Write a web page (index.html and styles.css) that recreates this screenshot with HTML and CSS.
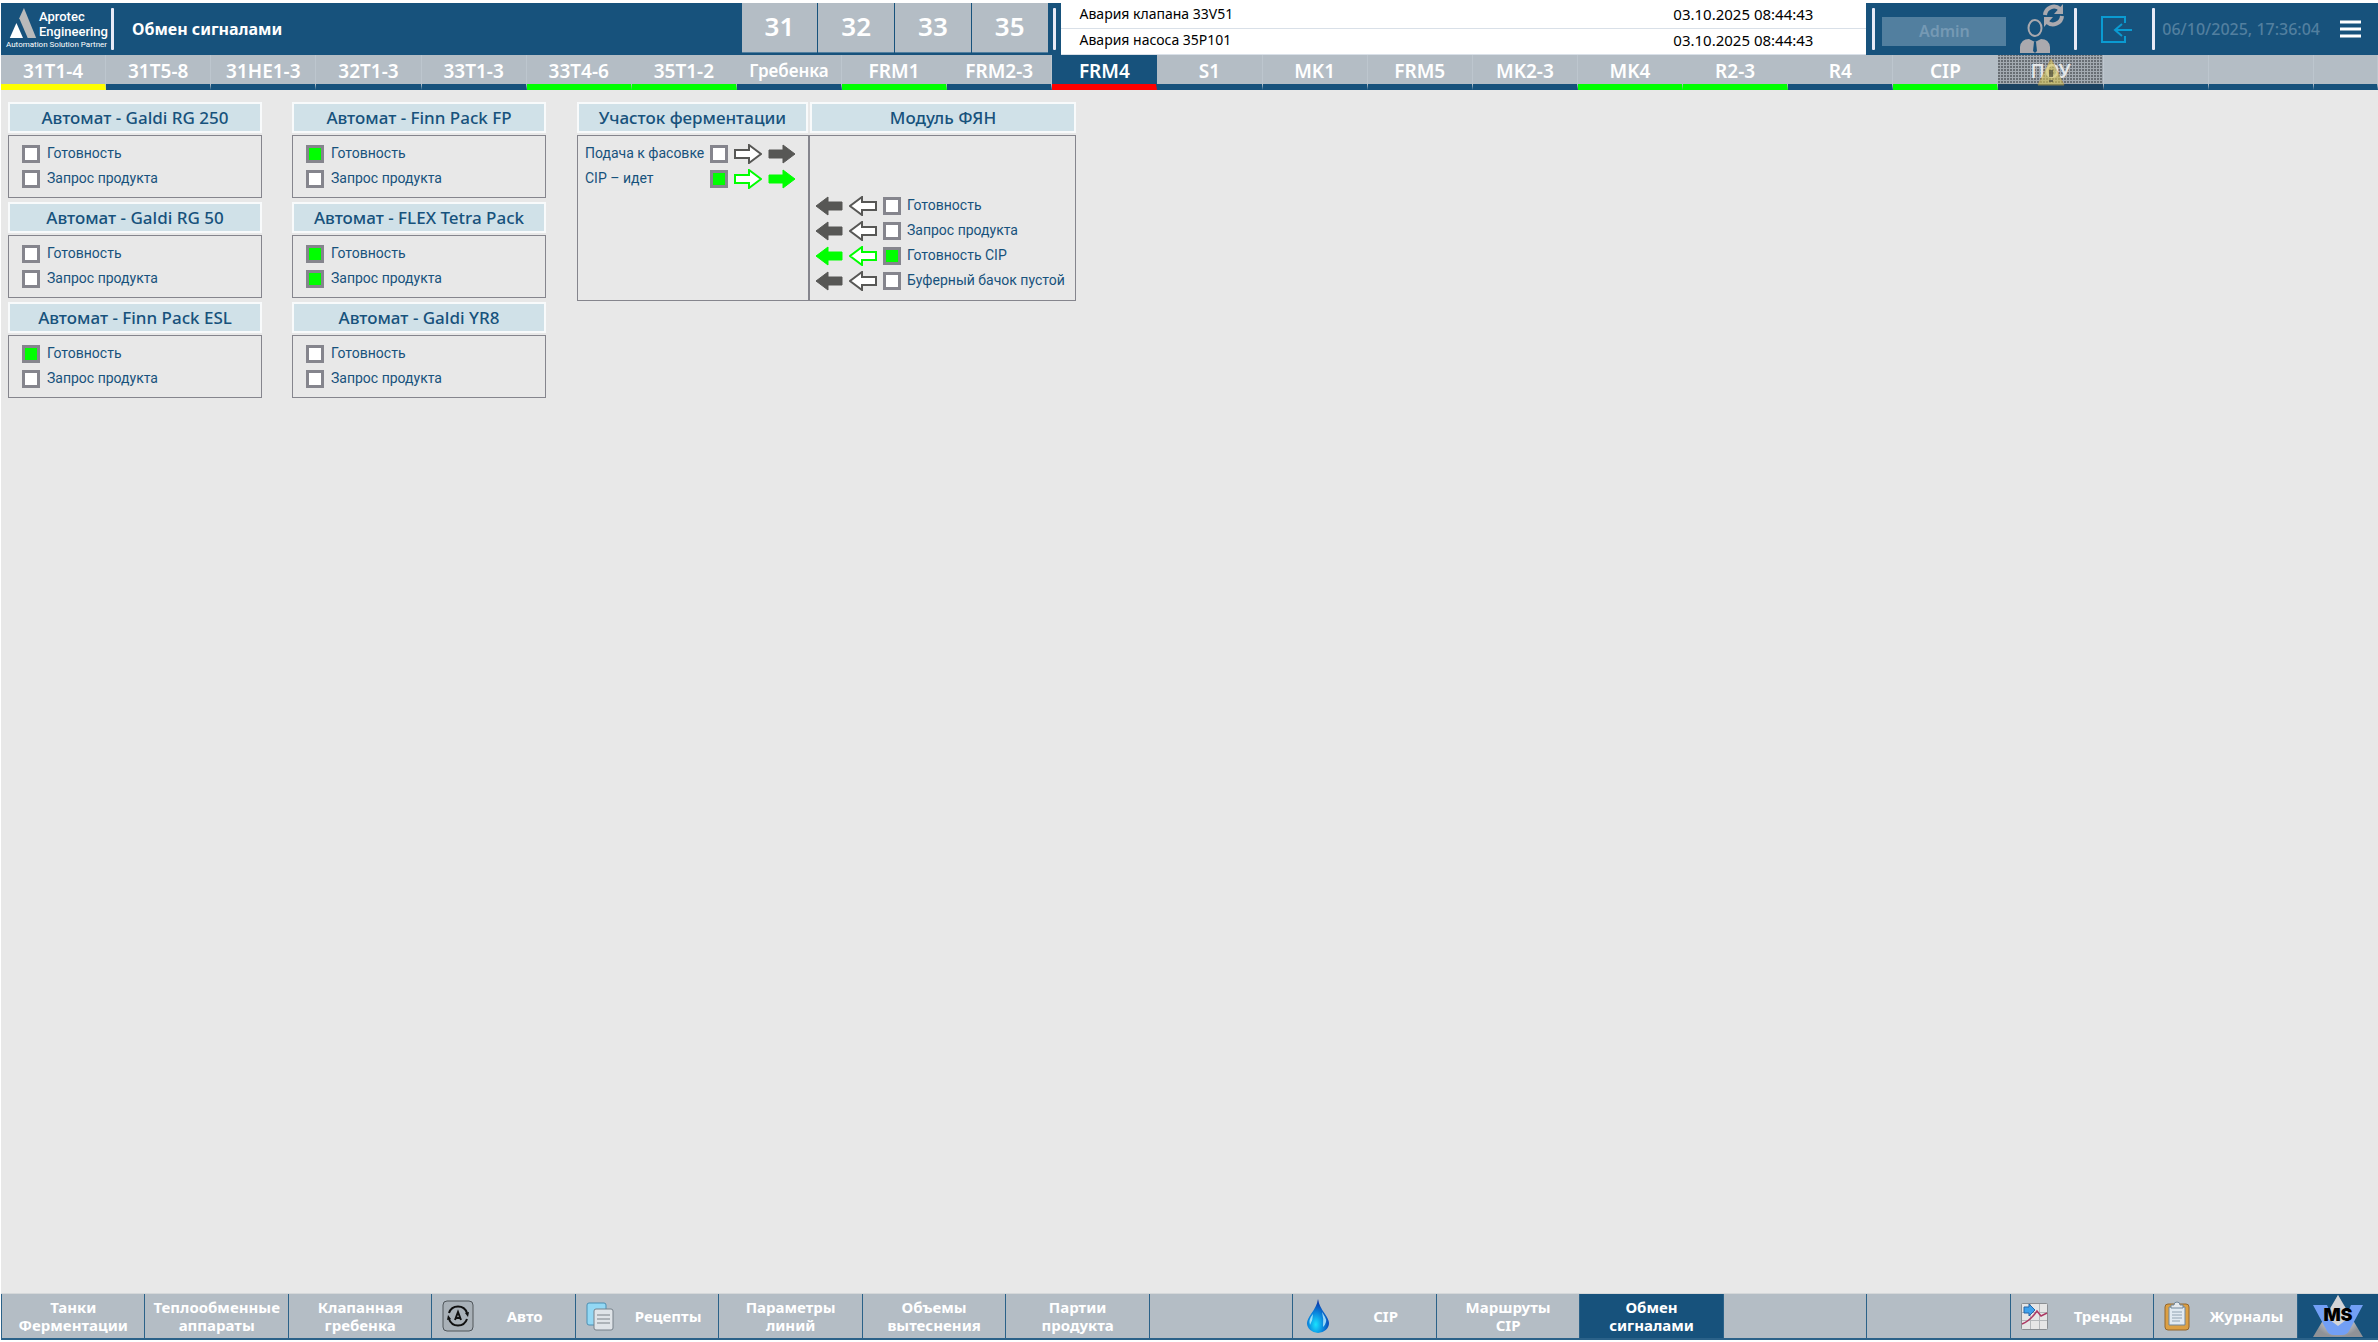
FILE: index.html
```html
<!DOCTYPE html>
<html lang="ru">
<head>
<meta charset="utf-8">
<title>Обмен сигналами</title>
<link rel="stylesheet" href="styles.css">
</head>
<body>
<svg class="defs" aria-hidden="true">
  <symbol id="arrow-right" viewBox="0 0 28 20"><path d="M1 6H15V1L27 10L15 19V14H1Z"/></symbol>
  <symbol id="arrow-left" viewBox="0 0 28 20"><path d="M27 6H13V1L1 10L13 19V14H27Z"/></symbol>
</svg>

<header class="topbar">
  <div class="logo">
    <svg class="logo-mark" viewBox="0 0 28 34" aria-hidden="true">
      <path d="M10 12L15 1L28 33H19Z" fill="#b9babb"/>
      <path d="M7 17L14 33H0Z" fill="#fff"/>
    </svg>
    <div class="logo-name">Aprotec<br>Engineering</div>
    <div class="logo-tag">Automation Solution Partner</div>
  </div>
  <span class="sep"></span>
  <h1 class="page-title">Обмен сигналами</h1>
  <nav class="units">
    <button type="button">31</button>
    <button type="button">32</button>
    <button type="button">33</button>
    <button type="button">35</button>
  </nav>
  <span class="sep"></span>
  <table class="alarms">
    <tr><td>Авария клапана 33V51</td><td class="when">03.10.2025 08:44:43</td></tr>
    <tr><td>Авария насоса 35P101</td><td class="when">03.10.2025 08:44:43</td></tr>
  </table>
  <span class="sep"></span>
  <button type="button" class="user">Admin</button>
  <button type="button" class="icon-button" aria-label="Сменить пользователя">
    <svg width="44" height="50" viewBox="0 0 44 50">
      <ellipse cx="15" cy="24" rx="6.500" ry="8" fill="none" stroke="#aaa9ae" stroke-width="2"/>
      <path d="M0 49V43Q1 35 9 35L15 38L21 35Q29 35 30 43V49Z" fill="#aaa9ae"/>
      <path d="M14 38H16L17 47L15 49L13 47Z" fill="#17527c"/>
      <path d="M25 11A9 9 0 0 1 40 5M42 12A9 9 0 0 1 27 18" fill="none" stroke="#aaa9ae" stroke-width="4"/>
      <path d="M43 0V10H34ZM24 23V13H33Z" fill="#aaa9ae"/>
    </svg>
  </button>
  <span class="sep"></span>
  <button type="button" class="icon-button exit" aria-label="Выход">
    <svg width="32" height="27" viewBox="0 0 32 27" fill="none" stroke="#0a9bd2" stroke-width="2">
      <path d="M24 7V1H1V26H24V20M31 14H14M21 8L14 14L21 20"/>
    </svg>
  </button>
  <span class="sep"></span>
  <time class="clock">06/10/2025, 17:36:04</time>
  <button type="button" class="icon-button menu" aria-label="Меню">
    <svg width="21" height="18" viewBox="0 0 21 18" stroke="#fff" stroke-width="3"><path d="M0 2H21M0 9H21M0 16H21"/></svg>
  </button>
</header>

<nav class="tabs">
  <button type="button" class="warn">31T1-4</button>
  <button type="button">31T5-8</button>
  <button type="button">31HE1-3</button>
  <button type="button">32T1-3</button>
  <button type="button">33T1-3</button>
  <button type="button" class="run">33T4-6</button>
  <button type="button" class="run">35T1-2</button>
  <button type="button" class="word">Гребенка</button>
  <button type="button" class="run">FRM1</button>
  <button type="button">FRM2-3</button>
  <button type="button" class="alarm active">FRM4</button>
  <button type="button">S1</button>
  <button type="button">MK1</button>
  <button type="button">FRM5</button>
  <button type="button">MK2-3</button>
  <button type="button" class="run">MK4</button>
  <button type="button" class="run">R2-3</button>
  <button type="button">R4</button>
  <button type="button" class="run">CIP</button>
  <button type="button" class="offline">ПОУ
    <svg class="warning" width="28" height="28" viewBox="0 0 28 28" aria-hidden="true">
      <path d="M14 1L27 27H1Z" fill="#d6c455" stroke="#c9a040" opacity=".6"/>
      <path d="M14 12V19M14 22V24" stroke="#4c4c3c" stroke-width="4" opacity=".7"/>
    </svg>
  </button>
  <span></span><span></span><span></span>
</nav>

<main class="board">
  <div class="machines">
    <section class="machine">
      <h2>Автомат - Galdi RG 250</h2>
      <div class="box">
        <label><input type="checkbox">Готовность</label>
        <label><input type="checkbox">Запрос продукта</label>
      </div>
    </section>
    <section class="machine">
      <h2>Автомат - Finn Pack FP</h2>
      <div class="box">
        <label><input type="checkbox" checked>Готовность</label>
        <label><input type="checkbox">Запрос продукта</label>
      </div>
    </section>
    <section class="machine">
      <h2>Автомат - Galdi RG 50</h2>
      <div class="box">
        <label><input type="checkbox">Готовность</label>
        <label><input type="checkbox">Запрос продукта</label>
      </div>
    </section>
    <section class="machine">
      <h2>Автомат - FLEX Tetra Pack</h2>
      <div class="box">
        <label><input type="checkbox" checked>Готовность</label>
        <label><input type="checkbox" checked>Запрос продукта</label>
      </div>
    </section>
    <section class="machine">
      <h2>Автомат - Finn Pack ESL</h2>
      <div class="box">
        <label><input type="checkbox" checked>Готовность</label>
        <label><input type="checkbox">Запрос продукта</label>
      </div>
    </section>
    <section class="machine">
      <h2>Автомат - Galdi YR8</h2>
      <div class="box">
        <label><input type="checkbox">Готовность</label>
        <label><input type="checkbox">Запрос продукта</label>
      </div>
    </section>
  </div>

  <div class="exchange">
    <section class="source">
      <h2>Участок ферментации</h2>
      <div class="box">
        <div class="signal">
          <label for="feed">Подача к фасовке</label><input type="checkbox" id="feed">
          <svg class="arrow hollow"><use href="#arrow-right"/></svg><svg class="arrow"><use href="#arrow-right"/></svg>
        </div>
        <div class="signal on">
          <label for="cip">CIP – идет</label><input type="checkbox" id="cip" checked>
          <svg class="arrow hollow"><use href="#arrow-right"/></svg><svg class="arrow"><use href="#arrow-right"/></svg>
        </div>
      </div>
    </section>
    <section class="target">
      <h2>Модуль ФЯН</h2>
      <div class="box">
        <div class="signal">
          <svg class="arrow"><use href="#arrow-left"/></svg><svg class="arrow hollow"><use href="#arrow-left"/></svg>
          <input type="checkbox" id="ready"><label for="ready">Готовность</label>
        </div>
        <div class="signal">
          <svg class="arrow"><use href="#arrow-left"/></svg><svg class="arrow hollow"><use href="#arrow-left"/></svg>
          <input type="checkbox" id="request"><label for="request">Запрос продукта</label>
        </div>
        <div class="signal on">
          <svg class="arrow"><use href="#arrow-left"/></svg><svg class="arrow hollow"><use href="#arrow-left"/></svg>
          <input type="checkbox" id="ready-cip" checked><label for="ready-cip">Готовность CIP</label>
        </div>
        <div class="signal">
          <svg class="arrow"><use href="#arrow-left"/></svg><svg class="arrow hollow"><use href="#arrow-left"/></svg>
          <input type="checkbox" id="buffer"><label for="buffer">Буферный бачок пустой</label>
        </div>
      </div>
    </section>
  </div>
</main>

<nav class="bottombar">
  <button type="button"><span>Танки<br>Ферментации</span></button>
  <button type="button"><span>Теплообменные<br>аппараты</span></button>
  <button type="button"><span>Клапанная<br>гребенка</span></button>
  <button type="button">
    <svg width="32" height="32" viewBox="0 0 32 32" fill="none" aria-hidden="true">
      <rect x="1" y="1" width="30" height="30" rx="4" fill="#a9b1b8" stroke="#50565b"/>
      <path d="M7 13A9.500 9.500 0 0 1 25 13M25 19A9.500 9.500 0 0 1 7 19" stroke="#111" stroke-width="2"/>
      <path d="M23 13L27 12L26 17ZM9 19L5 20L6 15Z" fill="#111"/>
      <path d="M13 20L16 12L19 20M14 18H18" stroke="#111" stroke-width="2"/>
    </svg>
    <span>Авто</span>
  </button>
  <button type="button">
    <svg width="32" height="32" viewBox="0 0 32 32" aria-hidden="true">
      <rect x="1" y="3" width="19" height="22" rx="2" fill="#93d8f4" stroke="#4b8fb3"/>
      <rect x="8" y="9" width="19" height="21" rx="2" fill="#dfe4e8" stroke="#77818a"/>
      <path d="M11 15H24M11 19H24M11 23H24" stroke="#7b8288"/>
    </svg>
    <span>Рецепты</span>
  </button>
  <button type="button"><span>Параметры<br>линий</span></button>
  <button type="button"><span>Объемы<br>вытеснения</span></button>
  <button type="button"><span>Партии<br>продукта</span></button>
  <button type="button" aria-label="Свободно"></button>
  <button type="button">
    <svg width="32" height="36" viewBox="0 0 32 36" aria-hidden="true">
      <defs><radialGradient id="water" cx=".4" cy=".75" r=".7"><stop offset="0" stop-color="#19e2ff"/><stop offset=".5" stop-color="#0a86dd"/><stop offset="1" stop-color="#0830a6"/></radialGradient></defs>
      <path d="M15 1Q16 8 22 16Q26 22 26 25A11 10 0 0 1 4 25Q4 22 8 16Q14 8 15 1Z" fill="url(#water)"/>
      <path d="M10 16Q5 22 7 27Q10 22 10 16ZM19 14Q21 21 20 29Q25 24 22 19Z" fill="#bdf0ff" opacity=".8"/>
    </svg>
    <span>CIP</span>
  </button>
  <button type="button"><span>Маршруты<br>CIP</span></button>
  <button type="button" class="active"><span>Обмен<br>сигналами</span></button>
  <button type="button" aria-label="Свободно"></button>
  <button type="button" aria-label="Свободно"></button>
  <button type="button">
    <svg width="32" height="32" viewBox="0 0 32 32" aria-hidden="true">
      <rect x="0.500" y="3.500" width="26" height="26" rx="1" fill="#e6e6e6" stroke="#8b8f93"/>
      <path d="M9.500 4V29M18.500 4V29M1 12.500H26M1 20.500H26" stroke="#b4b7ba"/>
      <path d="M1 24Q9 21 16 11L20 16L26 13" fill="none" stroke="#ad3863" stroke-width="1.500"/>
      <path d="M3 7H8V4L14 10L8 16V13H3Z" fill="#3fa2ed" stroke="#2767a8"/>
    </svg>
    <span>Тренды</span>
  </button>
  <button type="button">
    <svg width="32" height="32" viewBox="0 0 32 32" aria-hidden="true">
      <rect x="1" y="4" width="24" height="26" rx="3" fill="#dca044" stroke="#94662c"/>
      <path d="M5 7H21V25H5Z" fill="#e1eaf2" stroke="#71879b"/>
      <path d="M8 12H18M8 15H18M8 18H18M8 21H16" stroke="#90a2b2"/>
      <path d="M7 8V5H10Q10 2 13 2Q16 2 16 5H19V8Z" fill="#e5e9ed" stroke="#71879b"/>
    </svg>
    <span>Журналы</span>
  </button>
  <button type="button" class="brand" aria-label="MS">
    <svg width="50" height="42" viewBox="0 0 50 42">
      <defs><radialGradient id="steel"><stop offset="0" stop-color="#fff"/><stop offset="1" stop-color="#8f9297"/></radialGradient></defs>
      <path d="M25 0L50 42H0Z" fill="url(#steel)"/>
      <path d="M0 10H14L21 26H31L38 10H50L36 36Q34 40 29 40H21Q16 40 14 36Z" fill="#729ff5"/>
      <path d="M25 0L37 22L25 31L13 22Z" fill="#d3d5d8"/>
      <text x="25" y="26" text-anchor="middle" class="brand-text">MS</text>
    </svg>
  </button>
</nav>
</body>
</html>
```
FILE: styles.css
```css
:root {
  --blue: #17527c;
  --blue-soft: #527f9f;
  --gray: #b4bdc5;
  --green: #00ff00;
  --frame: #85858d;
}

* { box-sizing: border-box; }

body {
  display: flex;
  flex-direction: column;
  min-height: 100vh;
  margin: 0;
  padding: 3px 0 0 1px;
  background: #fff;
  font-family: "Noto Sans", "Open Sans", sans-serif;
  color: var(--blue);
}

button {
  margin: 0;
  padding: 0;
  border: 0;
  background: none;
  color: inherit;
  font: inherit;
  cursor: pointer;
}

h1, h2 { margin: 0; }

.defs { display: none; }

/* Top bar */
.topbar {
  display: flex;
  align-items: center;
  height: 52px;
  background: var(--blue);
  color: #fff;
}

.sep {
  flex: none;
  width: 3px;
  height: 42px;
  border-radius: 1px;
  background: #e8eaf6;
}

.logo {
  display: grid;
  grid-template-columns: 28px auto;
  column-gap: 2px;
  width: 110px;
  padding-left: 8px;
  font-family: Roboto, sans-serif;
}

.logo-mark { width: 28px; height: 32px; }

.logo-name {
  padding-top: 2px;
  font-size: 13px;
  font-weight: 500;
  line-height: 15px;
}

.logo-tag {
  grid-column: 1 / -1;
  margin-left: -3px;
  font-size: 8px;
  line-height: 12px;
  white-space: nowrap;
}

.page-title {
  flex: 1;
  padding-left: 18px;
  font-size: 16px;
  font-weight: 700;
}

.units {
  display: flex;
  align-self: stretch;
  gap: 1px;
  width: 306px;
  margin-right: 5px;
}

.units button {
  flex: 1;
  margin-bottom: 2px;
  padding-bottom: 3px;
  border-bottom: 1px solid var(--blue-soft);
  background: var(--gray);
  font-size: 26px;
  font-weight: 600;
  line-height: 40px;
}

.alarms {
  width: 33.9%;
  height: 52px;
  margin: 0 6px 0 5px;
  border-collapse: collapse;
  background: #fff;
  color: #000;
  font-size: 14px;
  line-height: 20px;
}

.alarms td {
  padding: 0 0 2px 19px;
  border-bottom: 1px solid #d9e0e8;
}

.alarms .when { width: 212px; font-size: 15px; }

.user {
  width: 124px;
  height: 29px;
  margin: 4px 14px 0 7px;
  background: var(--blue-soft);
  color: #7599b4;
  font-size: 16px;
  font-weight: 600;
}

.icon-button { display: flex; margin-right: 10px; }
.exit { margin: 0 19px 0 24px; }

.clock {
  padding-left: 7px;
  color: #527f9f;
  font-size: 16px;
  font-weight: 500;
  white-space: nowrap;
}

.menu { margin: 0 17px 0 20px; }

/* Line tabs */
.tabs {
  display: grid;
  grid-template-columns: repeat(22, 100fr) 61fr;
  height: 35px;
  background: var(--gray);
}

.tabs > * {
  position: relative;
  padding-top: 3px;
  border-right: 1px solid #bdc6ce;
  border-bottom: 6px solid var(--blue);
  color: #fff;
  font-size: 19px;
  font-weight: 600;
  line-height: 26px;
}

.tabs .word { font-size: 17px; }
.tabs .warn { border-bottom-color: #ff0; }
.tabs .run { border-bottom-color: var(--green); border-right-color: var(--gray); }
.tabs .alarm { border-bottom-color: #f00; }
.tabs .active { background: var(--blue); border-right-color: var(--blue); }

.tabs .offline {
  border-bottom-color: #1b4261;
  background:
    repeating-linear-gradient(90deg, transparent 0 2px, #a3aab1 2px 3px),
    repeating-linear-gradient(0deg, #a3aab1 0 1px, #686e74 1px 3px);
  color: #e3e6e8;
}

.warning {
  position: absolute;
  top: 3px;
  left: 50%;
  margin-left: -14px;
}

/* Signal board */
.board {
  display: flex;
  flex: 1;
  align-items: flex-start;
  gap: 31px;
  padding: 12px 7px;
  background: #e8e8e8;
}

.board h2 {
  height: 31px;
  margin-bottom: 2px;
  border: 2px solid #f8fafb;
  background: #d0e1e8;
  font-size: 17px;
  font-weight: 500;
  line-height: 28px;
  text-align: center;
}

.box {
  border: 1px solid var(--frame);
  font-family: Roboto, sans-serif;
  font-size: 14px;
  line-height: 25px;
}

.machines {
  display: grid;
  grid-template-columns: 254px 254px;
  gap: 4px 30px;
}

.machine .box {
  height: 63px;
  padding: 5px 13px;
}

.machine label {
  display: flex;
  align-items: center;
  gap: 7px;
}

.board input {
  flex: none;
  width: 18px;
  height: 18px;
  margin: 0;
  border: 3px solid var(--frame);
  background: #fff;
  appearance: none;
}

.board input:checked { background: var(--green); }

.exchange { display: flex; }

.exchange .box {
  height: 166px;
  padding: 5px 12px 5px 7px;
}

.source { width: 232px; }
.source h2 { margin-right: 1px; }
.target { width: 267px; }
.target h2 { margin-left: 1px; }

.target .box {
  padding: 57px 0 0 5px;
}

.signal {
  display: flex;
  align-items: center;
  gap: 6px;
}

.signal label { white-space: nowrap; }
.source .signal label { flex: 1; min-width: 0; }

.arrow {
  flex: none;
  width: 28px;
  height: 20px;
  fill: #575755;
  stroke: #575755;
  stroke-width: 1;
}

.hollow { fill: #fff; stroke-width: 2; }
.on .arrow { fill: var(--green); stroke: var(--green); }
.on .hollow { fill: #fff; }

/* Bottom navigation */
.bottombar {
  display: grid;
  grid-template-columns: repeat(16, 143fr) 81fr;
  height: 49px;
  border-top: 1px solid #d5d8da;
  border-bottom: 2px solid #fff;
}

.bottombar button {
  display: flex;
  align-items: center;
  padding-left: 10px;
  border-left: 1px solid #2b6289;
  border-bottom: 2px solid #2b6289;
  background: var(--gray);
  color: #fff;
  font-size: 15px;
  font-weight: 700;
  line-height: 18px;
}

.bottombar span { flex: 1; margin-left: -10px; white-space: nowrap; }
.bottombar svg + span { margin: 0; }
.bottombar .active, .bottombar .brand { background: var(--blue); }
.bottombar .brand { justify-content: center; padding: 0; }

.brand-text {
  fill: #000;
  font: 900 18px Inter, sans-serif;
}
```
